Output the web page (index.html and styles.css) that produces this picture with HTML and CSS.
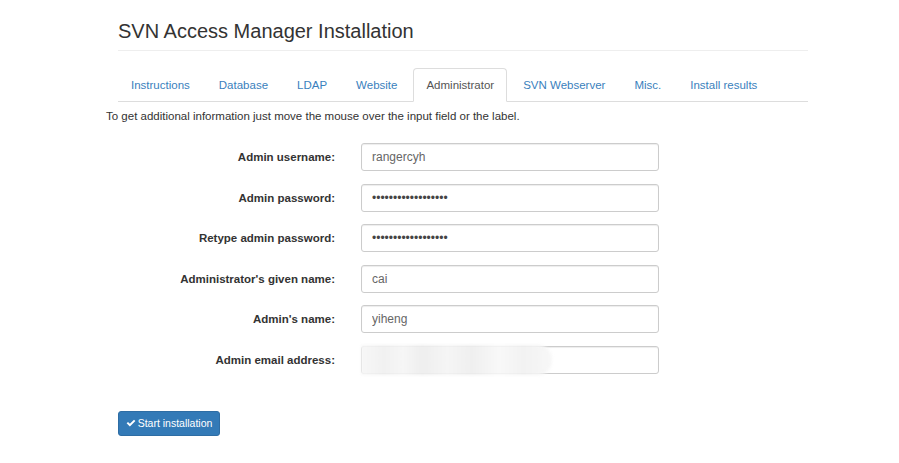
FILE: index.html
```html
<!DOCTYPE html>
<html>
<head>
<meta charset="utf-8">
<link rel="stylesheet" href="styles.css">
</head>
<body>
<div class="page">
  <div class="container">
    <h1 class="title">SVN Access Manager Installation</h1>
    <ul class="tabs">
      <li class="tab">Instructions</li>
      <li class="tab">Database</li>
      <li class="tab">LDAP</li>
      <li class="tab">Website</li>
      <li class="tab active">Administrator</li>
      <li class="tab">SVN Webserver</li>
      <li class="tab">Misc.</li>
      <li class="tab">Install results</li>
    </ul>
  </div>
  <p class="info">To get additional information just move the mouse over the input field or the label.</p>
  <form class="form">
    <label class="label">Admin username:</label>
    <input class="field" type="text" value="rangercyh">
    <label class="label">Admin password:</label>
    <input class="field" type="password" value="xxxxxxxxxxxxxxxxxx">
    <label class="label">Retype admin password:</label>
    <input class="field" type="password" value="xxxxxxxxxxxxxxxxxx">
    <label class="label">Administrator's given name:</label>
    <input class="field" type="text" value="cai">
    <label class="label">Admin's name:</label>
    <input class="field" type="text" value="yiheng">
    <label class="label">Admin email address:</label>
    <div class="field-wrap">
      <input class="field" type="text" value="">
      <div class="mask"></div>
    </div>
  </form>
  <div class="container">
    <button class="btn" type="button"><svg class="ok" viewBox="0 0 16 16" width="10" height="10"><path d="M1 8.5 L3.2 6.3 L6.2 9.2 L12.8 2.6 L15 4.8 L6.2 13.6 Z" fill="#fff"/></svg>Start installation</button>
  </div>
</div>
</body>
</html>
```

FILE: styles.css
```css
* { box-sizing: border-box; }
html, body { margin: 0; padding: 0; background: #fff; }
body {
  font-family: "Liberation Sans", Arial, sans-serif;
  color: #333;
}
.page { padding-top: 20px; }
.container { margin-left: 118px; width: 690px; }
.title {
  margin: 0;
  font-size: 20px;
  font-weight: normal;
  line-height: 23px;
  color: #333;
  padding-bottom: 7px;
  border-bottom: 1px solid #eee;
}
.tabs {
  list-style: none;
  margin: 17px 0 0 0;
  padding: 0;
  display: flex;
  border-bottom: 1px solid #ddd;
  height: 34px;
}
.tab {
  font-size: 11.5px;
  color: #3a7fbd;
  padding: 0 12px;
  margin-right: 3px;
  line-height: 33px;
  height: 34px;
  border: 1px solid transparent;
  border-radius: 4px 4px 0 0;
  margin-bottom: -1px;
}
.tab.active {
  color: #555;
  border-color: #ddd;
  border-bottom-color: #fff;
  background: #fff;
}
.info {
  margin: 7px 0 0 106px;
  font-size: 11.5px;
  line-height: 15px;
  color: #333;
}
.form {
  margin: 19px 0 0 106px;
  display: grid;
  grid-template-columns: 229px 298px;
  column-gap: 26px;
  row-gap: 12.5px;
}
.label {
  font-size: 11.5px;
  font-weight: bold;
  text-align: right;
  line-height: 28px;
  height: 28px;
  color: #333;
}
.field {
  width: 298px;
  height: 28px;
  border: 1px solid #ccc;
  border-radius: 3px;
  box-shadow: inset 0 1px 1px rgba(0,0,0,.075);
  padding: 0 10px;
  font-family: "Liberation Sans", Arial, sans-serif;
  font-size: 12px;
  color: #666;
  background: #fff;
  outline: none;
}
.field[type="password"] { color: #444; }
.field-wrap { position: relative; height: 28px; }
.mask {
  position: absolute;
  left: 0;
  top: -1px;
  width: 191px;
  height: 30px;
  border-radius: 0 14px 14px 0;
  background: linear-gradient(90deg, #f7f7f7 0%, #f1f1f1 12%, #f6f6f6 22%, #eeeeee 32%, #f5f5f5 45%, #efefef 58%, #f8f8f8 72%, #f2f2f2 85%, #f7f7f7 100%);
  filter: blur(1.5px);
}
.btn {
  margin-top: 37px;
  height: 25px;
  width: 102px;
  background: #337ab7;
  border: 1px solid #2e6da4;
  border-radius: 3px;
  color: #fff;
  font-family: "Liberation Sans", Arial, sans-serif;
  font-size: 10.5px;
  padding: 0;
  display: flex;
  align-items: center;
  justify-content: center;
  gap: 2px;
}
.ok { display: block; }
```
